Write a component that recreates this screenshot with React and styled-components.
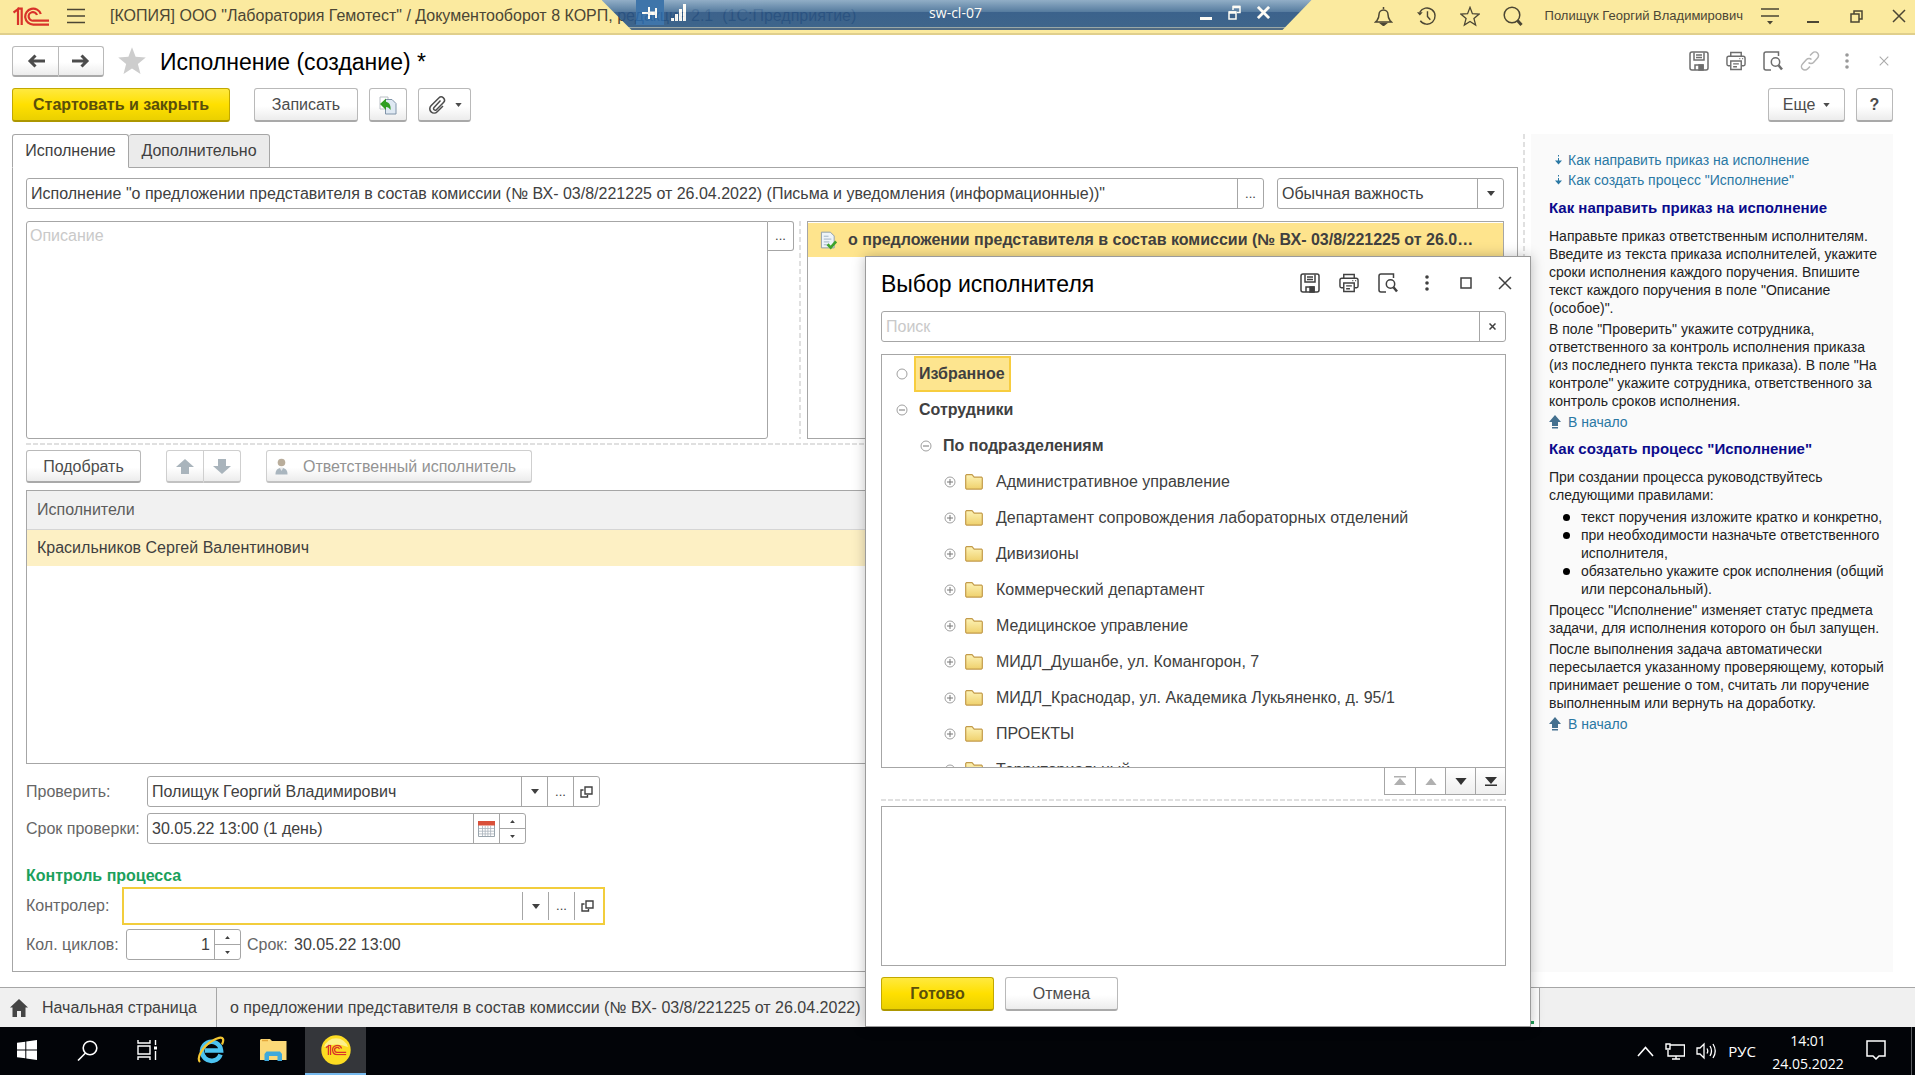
import React from "react";
import styled, { createGlobalStyle, css } from "styled-components";

const line = "#a6a6a6";
const sans = '"Liberation Sans", Arial, sans-serif';
const segoe = '"Open Sans", "Noto Sans", sans-serif';

const Global = createGlobalStyle`
  *, *::before, *::after { box-sizing: border-box; }
  body { margin: 0; background: #fff; }
  button, input, select, textarea { font: inherit; color: inherit; margin: 0; }
`;

const Screen = styled.div`
  position: relative;
  display: flex;
  flex-direction: column;
  min-height: 100vh;
  overflow: hidden;
  background: #fff;
  color: #404040;
  font: 16px/20px ${sans};
`;

/* ---------- title bar ---------- */
const TitleBar = styled.header`
  display: flex;
  align-items: center;
  height: 35px;
  padding: 0 6px 1px 13px;
  background: #fbea9f;
  border-bottom: 2px solid #e0cf8c;
  color: #4b4634;
`;
const AppTitle = styled.div`
  flex: 1;
  margin-left: 24px;
  white-space: pre;
`;
const UserName = styled.span`
  margin: 0 17px 0 22px;
  font-size: 13px;
`;
const PlainButton = styled.button`
  display: flex;
  align-items: center;
  justify-content: center;
  width: 20px;
  height: 24px;
  padding: 0;
  border: 0;
  background: none;
  color: ${(p) => p.$color || "inherit"};
`;
const IconStrip = styled.div`
  display: flex;
  align-items: center;
  gap: ${(p) => p.$gap}px;
`;

/* ---------- remote session bar ---------- */
const RemoteBar = styled.div`
  position: absolute;
  top: 0;
  left: 50%;
  margin-left: -356px;
  display: flex;
  align-items: center;
  justify-content: space-between;
  width: 710px;
  height: 30px;
  padding: 0 36px 5px 34px;
  background: linear-gradient(#86a8cb, #44709f 12px, #27548a 12px, #2a5789 27px, #8fa0a8 27px, #8fa0a8 28px, #405f80 28px);
  clip-path: polygon(0 0, 100% 0, 681px 100%, 30px 100%);
  opacity: 0.9;
  color: #fff;
  font: 14px/20px ${segoe};
`;
const RemoteSide = styled.div`
  display: flex;
  align-items: center;
  gap: ${(p) => p.$gap}px;
  width: 84px;
  padding-right: ${(p) => (p.$end ? 6 : 0)}px;
  justify-content: ${(p) => (p.$end ? "flex-end" : "flex-start")};
`;
const Pin = styled(PlainButton)`
  width: 28px;
  height: 25px;
  background: #2b69ab;
`;

/* ---------- form header ---------- */
const HeaderRow = styled.div`
  display: flex;
  align-items: center;
  height: 30px;
  margin: 11px 21px 12px 12px;
`;
const Heading = styled.h1`
  flex: 1;
  margin: 0 0 0 ${(p) => p.$ml || 0}px;
  padding-top: 1px;
  color: #000;
  font-size: 23px;
  line-height: 28px;
  font-weight: 400;
`;
const CommandRow = styled.div`
  display: flex;
  height: 34px;
  margin: 0 22px 12px 12px;
`;
const Spacer = styled.div`
  flex: ${(p) => (p.$w ? "none" : 1)};
  width: ${(p) => p.$w || 0}px;
`;
const Button = styled.button`
  display: flex;
  align-items: center;
  justify-content: ${(p) => (p.$start ? "flex-start" : "center")};
  gap: ${(p) => p.$gap || 0}px;
  flex: none;
  width: ${(p) => p.$w}px;
  height: ${(p) => p.$h || 34}px;
  padding: 1px 0 0 ${(p) => (p.$start ? 8 : 0)}px;
  border: 1px solid #b9b9b9;
  border-bottom: 2px solid #a9a9a9;
  border-radius: 3px;
  background: linear-gradient(#fff 55%, #ececec);
  color: #4c4c4c;
  ${(p) => p.$primary && css`
    border-color: #c2a800;
    border-bottom-color: #ad9700;
    background: linear-gradient(#ffe93f, #ffe000 50%, #ead000);
    color: #5a4f0a;
    font-weight: 700;
  `}
  &:disabled {
    border-color: #cfcfcf;
    border-bottom-color: #c2c2c2;
    color: #939393;
  }
`;
const ButtonPair = styled.div`
  display: flex;
  & > button:first-child { border-radius: 3px 0 0 3px; }
  & > button:last-child { border-left: 0; border-radius: 0 3px 3px 0; }
`;

/* ---------- body ---------- */
const Body = styled.main`
  flex: 1;
  display: flex;
  padding: 0 22px 15px 12px;
`;
const FormColumn = styled.section`
  flex: 1;
  min-width: 0;
  display: flex;
  flex-direction: column;
`;
const Tabs = styled.div`
  display: flex;
  height: 34px;
`;
const Tab = styled.button`
  position: relative;
  width: ${(p) => p.$w}px;
  height: 34px;
  padding: 0;
  border: 1px solid ${line};
  border-left-width: ${(p) => (p.$active ? 1 : 0)}px;
  border-bottom-color: ${(p) => (p.$active ? "#fff" : line)};
  border-radius: 3px 3px 0 0;
  background: ${(p) => (p.$active ? "#fff" : "#ebebeb")};
`;
const Panel = styled.div`
  flex: 1;
  display: flex;
  flex-direction: column;
  margin-top: -1px;
  padding: 10px 13px 11px;
  border: 1px solid ${line};
`;
const Row = styled.div`
  display: flex;
  gap: ${(p) => p.$gap || 0}px;
  margin-top: ${(p) => p.$mt || 0}px;
  height: ${(p) => (p.$h ? p.$h + "px" : "auto")};
  align-items: center;
`;
const Field = styled.div`
  display: flex;
  flex: ${(p) => (p.$w ? "none" : 1)};
  width: ${(p) => (p.$w ? p.$w + "px" : "auto")};
  min-width: 0;
  height: 31px;
  border: 1px solid ${line};
  border-radius: 3px;
  background: #fff;
  overflow: hidden;
  ${(p) => p.$focused && css`
    height: 38px;
    padding: 3px 3px 3px 2px;
    border: 2px solid #f2cd3c;
    border-radius: 0;
  `}
`;
const Input = styled.input`
  flex: 1;
  min-width: 0;
  padding: 0 4px;
  border: 0;
  outline: 0;
  background: none;
  text-align: ${(p) => (p.$right ? "right" : "left")};
  &::placeholder { color: #c9c9c9; opacity: 1; }
`;
const Select = styled.select`
  flex: 1;
  min-width: 0;
  padding: 0 4px;
  border: 0;
  outline: 0;
  appearance: none;
  background: none;
`;
const FieldButton = styled.button`
  display: flex;
  align-items: center;
  justify-content: center;
  width: 26px;
  padding: 0;
  border: 0;
  border-left: 1px solid ${line};
  background: none;
  font-size: 13px;
`;
const SelectArrow = styled(FieldButton).attrs({ as: "span", "aria-hidden": true })`
  pointer-events: none;
`;
const Spin = styled.div`
  display: flex;
  flex-direction: column;
  width: 26px;
  border-left: 1px solid ${line};
  & > button {
    flex: 1;
    width: auto;
    border-left: 0;
  }
  & > button + button { border-top: 1px solid ${line}; }
`;
const DescriptionWrap = styled.div`
  display: flex;
  align-items: flex-start;
  align-self: stretch;
  width: 768px;
`;
const Description = styled.textarea`
  flex: 1;
  align-self: stretch;
  min-width: 0;
  padding: 4px 3px;
  border: 1px solid ${line};
  border-radius: 3px 0 3px 3px;
  outline: 0;
  resize: none;
  &::placeholder { color: #c9c9c9; opacity: 1; }
`;
const SideButton = styled(FieldButton)`
  flex: none;
  height: 30px;
  border: 1px solid ${line};
  border-left: 0;
  border-radius: 0 3px 3px 0;
`;
const DashV = styled.div`
  flex: none;
  align-self: stretch;
  width: 2px;
  margin: 0 6px 0 5px;
  background: repeating-linear-gradient(#e0e0e0 0 5px, transparent 5px 8px);
`;
const DashH = styled.div`
  flex: none;
  height: 2px;
  margin: 4px 0 5px;
  background: repeating-linear-gradient(90deg, #e0e0e0 0 5px, transparent 5px 7px);
`;
const SubjectList = styled.div`
  flex: 1;
  min-width: 0;
  align-self: stretch;
  border: 1px solid ${line};
`;
const Subject = styled.div`
  display: flex;
  align-items: center;
  gap: 11px;
  height: 35px;
  padding: 0 28px 0 12px;
  border-top: 1px solid #fff;
  background: #fee48d;
  font-weight: 700;
  white-space: nowrap;
  & > span { overflow: hidden; text-overflow: ellipsis; }
`;
const TableBox = styled.div`
  flex: 1;
  min-height: 200px;
  margin-top: 7px;
  border: 1px solid ${line};
`;
const Table = styled.table`
  width: 100%;
  border-collapse: collapse;
  text-align: left;
  th, td { padding: 0 10px; font-weight: 400; }
  th { height: 38px; background: #f1f1f1; border-bottom: 1px solid #d5d5d5; color: #5c5c5c; }
  td { height: 37px; background: #fdf0c4; border: solid #fff; border-width: 1px 0; }
`;
const Label = styled.label`
  width: ${(p) => p.$w}px;
  color: #666;
  white-space: nowrap;
`;
const Section = styled.h2`
  margin: 22px 0 0;
  color: #1ba05c;
  font-size: 16px;
  line-height: 20px;
`;

/* ---------- help ---------- */
const Help = styled.aside`
  flex: none;
  width: 362px;
  padding: 16px 6px 0 18px;
  background: #fafafa;
  color: #222;
  font-size: 14px;
  line-height: 18px;
  p { margin: 0 0 3px; }
  h3 { margin: 9px 0 10px; color: #0b0b8c; font-size: 15px; line-height: 18px; }
  ul { margin: 4px 0 3px; padding-left: 14px; list-style: none; }
  li { display: flex; }
  li::before {
    content: "";
    flex: none;
    width: 7px;
    height: 7px;
    margin: 6px 11px 0 0;
    border-radius: 50%;
    background: #000;
  }
`;
const HelpLink = styled.a`
  display: flex;
  align-items: center;
  gap: ${(p) => (p.$contents ? 6 : 7)}px;
  height: ${(p) => (p.$contents ? 20 : 18)}px;
  padding-left: ${(p) => (p.$contents ? 6 : 0)}px;
  color: #2a78a4;
  text-decoration: none;
`;

/* ---------- open windows ---------- */
const WindowTabs = styled.nav`
  display: flex;
  height: 40px;
  border-top: 1px solid ${line};
  background: #f0f0f0;
`;
const WindowTab = styled.button`
  display: flex;
  align-items: center;
  gap: 14px;
  width: ${(p) => p.$w}px;
  padding: 0 0 0 ${(p) => p.$pad || 13}px;
  border: 0;
  border-right: 1px solid ${line};
  background: ${(p) => (p.$active ? "#fff" : "none")};
  white-space: nowrap;
  overflow: hidden;
`;
const ActiveMark = styled.span`
  flex: 1;
  align-self: flex-end;
  height: 3px;
  margin: 0 5px 3px 0;
  background: #1f9a55;
`;

/* ---------- dialog ---------- */
const Dialog = styled.section`
  position: absolute;
  top: 256px;
  right: 384px;
  bottom: 48px;
  display: flex;
  flex-direction: column;
  width: 666px;
  padding: 11px 24px 15px 15px;
  border: 1px solid #9b9b9b;
  background: #fff;
  box-shadow: 0 0 12px rgba(0, 0, 0, 0.25);
`;
const DialogHead = styled.div`
  display: flex;
  align-items: center;
  height: 30px;
  margin: 0 -9px 13px 0;
`;
const Tree = styled.ul`
  flex: 1;
  min-height: 0;
  height: 0;
  margin: 12px 0 0;
  padding: 0;
  border: 1px solid ${line};
  list-style: none;
  overflow: hidden;
`;
const TreeRow = styled.li`
  display: flex;
  align-items: center;
  height: ${(p) => (p.$selected ? 37 : 36)}px;
  padding-left: ${(p) => 13 + p.$level * 24}px;
  font-weight: ${(p) => (p.$bold ? 700 : 400)};
`;
const Toggle = styled.button`
  width: 14px;
  height: 14px;
  padding: 0;
  border: 0;
  background: none;
  line-height: 0;
`;
const TreeText = styled.span`
  margin-left: ${(p) => (p.$folder ? 13 : 5)}px;
  padding: ${(p) => (p.$folder ? 0 : "6px 4px 6px 5px")};
  ${(p) => p.$selected && css`
    padding: 6px 4px 6px 3px;
    border: 2px solid #f7cd3f;
    background: #fde58f;
  `}
`;
const FolderSlot = styled.span`
  margin-left: 8px;
  line-height: 0;
`;
const Pager = styled.div`
  display: flex;
  align-self: flex-end;
  border: 1px solid ${line};
  border-top: 0;
`;
const PagerButton = styled.button`
  display: flex;
  align-items: center;
  justify-content: center;
  width: 30px;
  height: 26px;
  padding: 0;
  border: 0;
  background: ${(p) => (p.disabled ? "#fff" : "linear-gradient(#fff, #efefef)")};
  color: #333;
  & + & { border-left: 1px solid ${line}; }
  &:disabled { color: #b0b0b0; }
`;
const Details = styled.div`
  height: 160px;
  border: 1px solid ${line};
`;

/* ---------- taskbar ---------- */
const Taskbar = styled.footer`
  display: flex;
  height: 48px;
  padding-right: 3px;
  background: #020408;
  color: #fff;
  font: 15px/23px ${segoe};
`;
const TaskButton = styled.button`
  display: flex;
  align-items: center;
  justify-content: center;
  width: ${(p) => p.$w || 61}px;
  padding: 0;
  border: 0;
  border-bottom: 2px solid ${(p) => (p.$active ? "#76b9ed" : "transparent")};
  background: ${(p) => (p.$active ? "#34363a" : "none")};
`;
const Clock = styled.time`
  width: 90px;
  padding-top: 2px;
  text-align: center;
  font-size: 14px;
`;
const DesktopEdge = styled.div`
  width: 1px;
  margin-left: 12px;
  background: #5a5c60;
`;

/* ---------- drawings ---------- */
const Svg = ({ w = 20, h = w, vb, sw = 1.5, children, fill = "none" }) => (
  <svg width={w} height={h} viewBox={vb || `0 0 ${w} ${h}`} fill={fill} stroke={fill === "none" ? "currentColor" : "none"} strokeWidth={sw} aria-hidden="true">
    {children}
  </svg>
);
const Logo1C = ({ color = "#d8322a" }) => (
  <svg width="36" height="19" viewBox="0 0 36 19" fill="none" stroke={color} strokeWidth="2.2" aria-hidden="true">
    <path d="M0.500 5.500 5 2.200V18" />
    <path d="M4.500 1.600h4.200V18" />
    <path d="M27.800 7A8 8 0 1 0 20.500 17.600H36" />
    <path d="M24 8A4.300 4.300 0 1 0 20.500 13.700H36" />
  </svg>
);
const Down = ({ w = 8, h = 5 }) => (
  <Svg w={w} h={h} vb="0 0 8 5" fill="currentColor"><path d="M0 0h8L4 5z" /></Svg>
);
const Up = ({ w = 5, h = 3 }) => (
  <Svg w={w} h={h} vb="0 0 8 5" fill="currentColor"><path d="M0 5h8L4 0z" /></Svg>
);
const Disk = () => (
  <Svg w={20}>
    <rect x="1" y="1" width="18" height="18" rx="2" />
    <path d="M5 1.500V9h10V1.500M7 4h6M7 6.500h6M6 19v-5h8v5" />
    <path d="M10 14h4v5h-4z" fill="currentColor" />
  </Svg>
);
const Printer = () => (
  <Svg w={21} h={20}>
    <path d="M5 5V1h11v4M4.500 15H2.500A1.500 1.500 0 0 1 1 13.500V7a2 2 0 0 1 2-2h15a2 2 0 0 1 2 2v6.500a1.500 1.500 0 0 1-1.500 1.500H16.500" />
    <path d="M5 10h11v9H5zM7.500 13h6M7.500 16h4M14 7.500h1M17 7.500h1" />
  </Svg>
);
const Preview = () => (
  <Svg w={20}>
    <path d="M8 19H3a2 2 0 0 1-2-2V3a2 2 0 0 1 2-2h12.500v4" />
    <circle cx="12.500" cy="11" r="4.200" />
    <path d="M15.500 14.200 19 18.500" strokeWidth="2.500" />
  </Svg>
);
const LinkIcon = () => (
  <Svg w={20}>
    <path d="M8.500 11.500a3.500 3.500 0 0 0 5 0l4-4.500a3.500 3.500 0 0 0-5-5L10 4.500M11.500 8.500a3.500 3.500 0 0 0-5 0l-4 4.500a3.500 3.500 0 0 0 5 5L10 15.500" />
  </Svg>
);
const Dots = () => (
  <Svg w={4} h={16} fill="currentColor"><circle cx="2" cy="2" r="1.800" /><circle cx="2" cy="8" r="1.800" /><circle cx="2" cy="14" r="1.800" /></Svg>
);
const Cross = ({ s = 14, sw = 1.5 }) => (
  <Svg w={s} vb="0 0 14 14" sw={sw}><path d="M1 1l12 12M13 1 1 13" /></Svg>
);
const OpenIcon = () => (
  <Svg w={13} h={12} sw={1.4}><path d="M5 1h7v7H5zM3.500 4H1v7h6.500V9" /></Svg>
);
const Arrow = ({ left }) => (
  <Svg w={18} h={14} sw={3}>
    <path d={left ? "M3 7h15M8.500 1.500 3 7l5.500 5.500" : "M0 7h15M9.500 1.500 15 7l-5.500 5.500"} />
  </Svg>
);
const BlockArrow = ({ down }) => (
  <Svg w={18} h={15} fill="#a9b4bc">
    <path d={down ? "M5 0h8v7h5l-9 8-9-8h5z" : "M5 15h8V8h5L9 0 0 8h5z"} />
  </Svg>
);
const Folder = () => (
  <svg width="18" height="16" viewBox="0 0 18 16" aria-hidden="true">
    <defs><linearGradient id="fld" x1="0" y1="0" x2="0" y2="1"><stop offset="0" stopColor="#fdf3b6" /><stop offset="1" stopColor="#efd06c" /></linearGradient></defs>
    <path d="M.7 14.200V1.500L1.500.7H7l2.200 2.400h7.300l.8.800v10.300l-1 .9H1.600z" fill="url(#fld)" stroke="#c39b4a" strokeWidth="1.200" />
  </svg>
);
const TreeMark = ({ kind }) => (
  <svg width="14" height="14" viewBox="0 0 14 14" fill="none" stroke="#a0a0a0" aria-hidden="true">
    <circle cx="7" cy="7" r="5" />
    {kind !== "leaf" && <path d="M4 7h6" stroke="#777" />}
    {kind === "plus" && <path d="M7 4v6" stroke="#777" />}
  </svg>
);
const DocCheck = () => (
  <svg width="18" height="19" viewBox="0 0 18 19" aria-hidden="true">
    <path d="M1.500.7h9.500l4 4v12.600H1.500z" fill="#eef4f9" stroke="#8c9dab" />
    <path d="M4 5h5M4 8h8M4 11h6M4 14h4" stroke="#9fb2c2" />
    <path d="M8 13.500l3.300 3.500L17 10.500" fill="none" stroke="#3fa32c" strokeWidth="2.800" />
  </svg>
);
const CopyBack = () => (
  <svg width="18" height="19" viewBox="0 0 18 19" aria-hidden="true">
    <path d="M1 1h8v12H1z" fill="#fff" stroke="#b9bfc5" />
    <path d="M6.500 3.500h6.500l4 4V18H6.500z" fill="#dfe9f3" stroke="#7f93a8" />
    <path d="M1 8l6-5.500v3.200c3.500.8 5 4 4.500 8.300-1.200-2-2.500-3-4.500-3v3z" fill="#2f9e22" />
  </svg>
);
const Clip = () => (
  <Svg w={18} h={18} sw={1.5}>
    <path d="M12.500 4.500 6 11.500a1.600 1.600 0 0 0 2.400 2.200L15.500 6.500a3.200 3.200 0 0 0-4.700-4.500L3 9.800a4.300 4.300 0 0 0 6.200 6L15 10" />
  </Svg>
);
const Person = () => (
  <svg width="13" height="18" viewBox="0 0 13 18" aria-hidden="true">
    <circle cx="6.500" cy="4.500" r="3.800" fill="#b9ad9b" />
    <path d="M.5 16.500c0-4 1.500-6.500 6-6.500s6 2.500 6 6.500z" fill="#aab6bf" />
    <path d="M4.500 9.500 6.500 13l2-3.500z" fill="#e8eaec" />
  </svg>
);
const Calendar = () => (
  <svg width="17" height="17" viewBox="0 0 17 17" aria-hidden="true">
    <path d="M.5 1.500h16v15H.5z" fill="#fff" stroke="#9aa5ad" />
    <path d="M0 1h17v4.500H0z" fill="#d9503a" />
    <path d="M1 8.500h15M1 11.200h15M1 13.900h15M4.500 6v10M7.200 6v10M9.900 6v10M12.600 6v10" stroke="#a9b3bb" strokeWidth=".8" />
  </svg>
);
const StarIcon = ({ s, filled }) => (
  <svg width={s} height={s} viewBox="0 0 24 24" fill={filled ? "#cdcdcd" : "none"} stroke={filled ? "none" : "currentColor"} strokeWidth="1.500" aria-hidden="true">
    <path d="M12 1l2.900 7.600 8.100.5-6.300 5.200 2.100 8L12 17.900l-6.800 4.400 2.100-8L1 9.100l8.100-.5z" />
  </svg>
);
const HelpDown = () => (
  <Svg w={7} h={12} sw={1} vb="0 0 7 12"><path d="M3.500 1v1.500M3.500 4v4" /><path d="M0 6.500h7L3.500 10.500z" fill="currentColor" stroke="none" /></Svg>
);
const HelpUp = () => (
  <Svg w={12} h={14} fill="#44708f"><path d="M6 0l6 7H9v4H3V7H0zM3 12h6v1.500H3z" /></Svg>
);

/* ---------- content ---------- */
const departments = [
  "Административное управление",
  "Департамент сопровождения лабораторных отделений",
  "Дивизионы",
  "Коммерческий департамент",
  "Медицинское управление",
  "МИДЛ_Душанбе, ул. Комангорон, 7",
  "МИДЛ_Краснодар, ул. Академика Лукьяненко, д. 95/1",
  "ПРОЕКТЫ",
  "Территориальный",
];
const rows = [
  { text: "Избранное", level: 0, kind: "leaf", bold: true, selected: true },
  { text: "Сотрудники", level: 0, kind: "minus", bold: true },
  { text: "По подразделениям", level: 1, kind: "minus", bold: true },
  ...departments.map((text) => ({ text, level: 2, kind: "plus", folder: true })),
];

const Choosers = () => (
  <>
    <FieldButton aria-label="Список"><Down /></FieldButton>
    <FieldButton aria-label="Выбрать">...</FieldButton>
    <FieldButton aria-label="Открыть"><OpenIcon /></FieldButton>
  </>
);
const Spinner = () => (
  <Spin>
    <FieldButton aria-label="Больше"><Up /></FieldButton>
    <FieldButton aria-label="Меньше"><Down w={5} h={3} /></FieldButton>
  </Spin>
);

export default function App() {
  return (
    <Screen>
      <Global />
      <TitleBar>
        <Logo1C />
        <Spacer $w={17} />
        <PlainButton aria-label="Меню"><Svg w={20} h={16} sw={1.6}><path d="M1 1.500h18M1 8h18M1 14.500h18" /></Svg></PlainButton>
        <AppTitle>{'[КОПИЯ] ООО "Лаборатория Гемотест" / Документооборот 8 КОРП, редакция 2.1  (1С:Предприятие)'}</AppTitle>
        <IconStrip $gap={23}>
          <PlainButton aria-label="Уведомления"><Svg w={19} h={20}><path d="M9.500 1v2M3 14.500c1.500-2 2-3.500 2-6a4.500 4.500 0 0 1 9 0c0 2.500.5 4 2 6l1.500 1.500h-16z" /><path d="M7 17.500h5l-2.500 2z" fill="currentColor" /></Svg></PlainButton>
          <PlainButton aria-label="История"><Svg w={21} h={20}><path d="M3 6a8.500 8.500 0 1 1 .5 9M11 5v5.500l3 3.500" /><path d="M0 6h6L3 9.500z" fill="currentColor" stroke="none" /></Svg></PlainButton>
          <PlainButton aria-label="Избранное"><StarIcon s={21} /></PlainButton>
          <PlainButton aria-label="Поиск"><Svg w={20}><circle cx="9" cy="9" r="7.800" /><path d="M14.500 14.500 18.500 19" strokeWidth="3" /></Svg></PlainButton>
        </IconStrip>
        <UserName>Полищук Георгий Владимирович</UserName>
        <IconStrip $gap={23}>
          <PlainButton aria-label="Настройка"><Svg w={18} h={18}><path d="M0 2h18M0 9h18" /><path d="M6 14h6l-3 3.500z" fill="currentColor" stroke="none" /></Svg></PlainButton>
          <PlainButton aria-label="Свернуть"><Svg w={12} h={16} sw={2}><path d="M0 14h12" /></Svg></PlainButton>
          <PlainButton aria-label="Восстановить"><Svg w={13} h={13}><path d="M1 4h8v8H1zM4 4V1h8v8H9" /></Svg></PlainButton>
          <PlainButton aria-label="Закрыть"><Cross /></PlainButton>
        </IconStrip>
      </TitleBar>

      <RemoteBar>
        <RemoteSide $gap={7}>
          <Pin aria-label="Закрепить"><Svg w={16} h={14} sw={2}><path d="M0 7h7M7 1v12M14 2v10" /><path d="M8 5.500h6v3.500H8z" fill="currentColor" stroke="none" /></Svg></Pin>
          <Svg w={16} h={17} fill="#fff"><path d="M0 14h3v3H0zM4 10h3v7H4zM8 5h3v12H8zM12 0h3v17h-3z" /></Svg>
        </RemoteSide>
        <span>sw-cl-07</span>
        <RemoteSide $gap={16} $end>
          <Svg w={12} h={14} sw={3}><path d="M0 12.500h12" /></Svg>
          <Svg w={13} h={15} sw={1.5}><path d="M1 7h7v7H1zM5 5V1.500h7v6H9" /><path d="M1 7.500h7M5 2h7" strokeWidth="2.500" /></Svg>
          <Cross s={13} sw={3} />
        </RemoteSide>
      </RemoteBar>

      <HeaderRow>
        <ButtonPair>
          <Button $w={47} $h={31} aria-label="Назад"><Arrow left /></Button>
          <Button $w={45} $h={31} aria-label="Вперед"><Arrow /></Button>
        </ButtonPair>
        <Spacer $w={13} />
        <StarIcon s={30} filled />
        <Heading $ml={13}>Исполнение (создание) *</Heading>
        <IconStrip $gap={17}>
          <PlainButton $color="#6d6d6d" aria-label="Сохранить"><Disk /></PlainButton>
          <PlainButton $color="#6d6d6d" aria-label="Печать"><Printer /></PlainButton>
          <PlainButton $color="#6d6d6d" aria-label="Просмотр"><Preview /></PlainButton>
          <PlainButton $color="#b5b5b5" aria-label="Ссылка"><LinkIcon /></PlainButton>
          <PlainButton $color="#999" aria-label="Действия"><Dots /></PlainButton>
          <PlainButton $color="#aaa" aria-label="Закрыть форму"><Cross s={10} /></PlainButton>
        </IconStrip>
      </HeaderRow>

      <CommandRow>
        <Button $primary $w={218}>Стартовать и закрыть</Button>
        <Spacer $w={24} />
        <Button $w={104}>Записать</Button>
        <Spacer $w={11} />
        <Button $w={38} aria-label="Создать на основании"><CopyBack /></Button>
        <Spacer $w={11} />
        <Button $w={53} $gap={9} aria-label="Файлы"><Clip /><Down w={7} h={4} /></Button>
        <Spacer />
        <Button $w={77} $gap={8}>Еще<Down w={7} h={4} /></Button>
        <Spacer $w={11} />
        <Button $w={37} aria-label="Справка"><b>?</b></Button>
      </CommandRow>

      <Body>
        <FormColumn>
          <Tabs>
            <Tab $active $w={117}>Исполнение</Tab>
            <Tab $w={141}>Дополнительно</Tab>
          </Tabs>
          <Panel>
            <Row $gap={13}>
              <Field>
                <Input aria-label="Наименование" defaultValue={'Исполнение "о предложении представителя в состав комиссии (№ ВХ- 03/8/221225 от 26.04.2022) (Письма и уведомления (информационные))"'} />
                <FieldButton aria-label="Выбрать">...</FieldButton>
              </Field>
              <Field $w={227}>
                <Select aria-label="Важность"><option>Обычная важность</option></Select>
                <SelectArrow><Down /></SelectArrow>
              </Field>
            </Row>
            <Row $mt={12} $h={218}>
              <DescriptionWrap>
                <Description placeholder="Описание" aria-label="Описание" />
                <SideButton aria-label="Выбрать описание">...</SideButton>
              </DescriptionWrap>
              <DashV />
              <SubjectList>
                <Subject><DocCheck /><span>о предложении представителя в состав комиссии (№ ВХ- 03/8/221225 от 26.04.2022)</span></Subject>
              </SubjectList>
            </Row>
            <DashH />
            <Row $gap={25}>
              <Button $w={115} $h={33}>Подобрать</Button>
              <ButtonPair>
                <Button $w={38} $h={33} disabled aria-label="Вверх"><BlockArrow /></Button>
                <Button $w={37} $h={33} disabled aria-label="Вниз"><BlockArrow down /></Button>
              </ButtonPair>
              <Button $w={266} $h={33} $gap={15} $start disabled><Person />Ответственный исполнитель</Button>
            </Row>
            <TableBox>
              <Table>
                <thead><tr><th scope="col">Исполнители</th></tr></thead>
                <tbody><tr><td>Красильников Сергей Валентинович</td></tr></tbody>
              </Table>
            </TableBox>
            <Row $mt={12}>
              <Label $w={121} htmlFor="check">Проверить:</Label>
              <Field $w={453}><Input id="check" defaultValue="Полищук Георгий Владимирович" /><Choosers /></Field>
            </Row>
            <Row $mt={6}>
              <Label $w={121} htmlFor="due">Срок проверки:</Label>
              <Field $w={379}>
                <Input id="due" defaultValue="30.05.22 13:00 (1 день)" />
                <FieldButton aria-label="Календарь"><Calendar /></FieldButton>
                <Spinner />
              </Field>
            </Row>
            <Section>Контроль процесса</Section>
            <Row $mt={1}>
              <Label $w={96} htmlFor="controller">Контролер:</Label>
              <Field $w={483} $focused><Input id="controller" /><Choosers /></Field>
            </Row>
            <Row $mt={4}>
              <Label $w={100} htmlFor="cycles">Кол. циклов:</Label>
              <Field $w={115}><Input id="cycles" $right defaultValue="1" /><Spinner /></Field>
              <Spacer $w={6} />
              <Label as="span" $w={47}>Срок:</Label>
              <span>30.05.22 13:00</span>
            </Row>
          </Panel>
        </FormColumn>
        <DashV />
        <Help>
          <HelpLink href="#send" $contents><HelpDown />Как направить приказ на исполнение</HelpLink>
          <HelpLink href="#create" $contents><HelpDown />Как создать процесс "Исполнение"</HelpLink>
          <h3 id="send">Как направить приказ на исполнение</h3>
          <p>Направьте приказ ответственным исполнителям. Введите из текста приказа исполнителей, укажите сроки исполнения каждого поручения. Впишите текст каждого поручения в поле "Описание (особое)".</p>
          <p>В поле "Проверить" укажите сотрудника, ответственного за контроль исполнения приказа (из последнего пункта текста приказа). В поле "На контроле" укажите сотрудника, ответственного за контроль сроков исполнения.</p>
          <HelpLink href="#top"><HelpUp />В начало</HelpLink>
          <h3 id="create">Как создать процесс "Исполнение"</h3>
          <p>При создании процесса руководствуйтесь следующими правилами:</p>
          <ul>
            <li>текст поручения изложите кратко и конкретно,</li>
            <li>при необходимости назначьте ответственного исполнителя,</li>
            <li>обязательно укажите срок исполнения (общий или персональный).</li>
          </ul>
          <p>Процесс "Исполнение" изменяет статус предмета задачи, для исполнения которого он был запущен.</p>
          <p>После выполнения задача автоматически пересылается указанному проверяющему, который принимает решение о том, считать ли поручение выполненным или вернуть на доработку.</p>
          <HelpLink href="#top"><HelpUp />В начало</HelpLink>
        </Help>
      </Body>

      <WindowTabs>
        <WindowTab $w={217} $pad={10}>
          <Svg w={18} h={18} fill="#454545"><path d="M9 0l9 8.500h-2.500V18h-4.500v-6h-4v6H2.500V8.500H0z" /></Svg>
          Начальная страница
        </WindowTab>
        <WindowTab $w={661}>о предложении представителя в состав комиссии (№ ВХ- 03/8/221225 от 26.04.2022)</WindowTab>
        <WindowTab $w={662} $active aria-label="Исполнение (создание)"><ActiveMark /></WindowTab>
      </WindowTabs>

      <Taskbar>
        <Spacer $w={3} />
        <TaskButton $w={48} aria-label="Пуск"><Svg w={20} fill="#fff"><path d="M0 2.800 8.300 1.700V9.500H0zM9.300 1.500 20 0v9.500H9.300zM0 10.500h8.300v7.800L0 17.200zM9.300 10.500H20V20L9.300 18.500z" /></Svg></TaskButton>
        <Spacer $w={6} />
        <TaskButton aria-label="Поиск в системе"><Svg w={21} h={21} sw={1.6}><circle cx="13" cy="8" r="6.800" /><path d="M8.500 13 1 20.500" /></Svg></TaskButton>
        <TaskButton $w={58} aria-label="Представление задач"><Svg w={21} h={20} sw={1.4}><path d="M1 0v3h12V0M1 20v-3h12v3M1 6h12v8H1zM18.500 0v5M18.500 11v9" /><path d="M17 6.500h3v3h-3z" fill="#fff" stroke="none" /></Svg></TaskButton>
        <TaskButton $w={69} aria-label="Internet Explorer">
          <svg width="28" height="28" viewBox="0 0 28 28" fill="none" aria-hidden="true">
            <path d="M23.500 18.500A9.500 9.500 0 1 1 24 14.500H8" stroke="#4cc3f1" strokeWidth="4.600" />
            <path d="M3 26C-1 22 6 10 15 5c5-3.200 10-4.600 11-2 .6 1.500 0 3.500-1 5.500" stroke="#f3c632" strokeWidth="2.200" />
          </svg>
        </TaskButton>
        <TaskButton $w={56} aria-label="Проводник">
          <svg width="27" height="24" viewBox="0 0 27 24" aria-hidden="true">
            <path d="M0 2 1 1h9l2 2h14.500v19H0z" fill="#fbd978" />
            <path d="M2 2.500h6" stroke="#e4a73a" strokeWidth="1.500" />
            <path d="M4.500 23V16l2-2.500h13.500l2 2.500v7h-4.500v-5h-8.500v5z" fill="#3fa9dc" />
          </svg>
        </TaskButton>
        <Spacer $w={4} />
        <TaskButton $active aria-label="1С:Предприятие">
          <svg width="30" height="30" viewBox="0 0 30 30" aria-hidden="true">
            <circle cx="15" cy="15" r="14.700" fill="#fcdc22" />
            <path d="M3 12a12.500 12 0 0 1 24 0Q15 7 3 12z" fill="#fdf08a" />
            <g transform="translate(4.500 9.500) scale(.58)"><Logo1C /></g>
          </svg>
        </TaskButton>
        <Spacer />
        <IconStrip $gap={11}>
          <Svg w={17} h={11} sw={1.6}><path d="M1 10l7.500-8.500L16 10" /></Svg>
          <Svg w={20} h={17} sw={1.4}><path d="M5 2h14.500v11H3V7M1 1h4v5H1zM11 13v3M7 16h8" /></Svg>
          <Svg w={21} h={18} sw={1.3}><path d="M1 6h3l4-4v14l-4-4H1zM11 6.500q1.500 2.500 0 5M14 4q3 5 0 10M17 2q4.500 7 0 14" /></Svg>
          <span>РУС</span>
        </IconStrip>
        <Spacer $w={7} />
        <Clock>14:01<br />24.05.2022</Clock>
        <TaskButton $w={46} aria-label="Центр уведомлений"><Svg w={20} h={20} sw={1.5}><path d="M1 1h18v15h-6l-3 3-3-3H1z" /></Svg></TaskButton>
        <DesktopEdge />
      </Taskbar>

      <Dialog role="dialog" aria-label="Выбор исполнителя">
        <DialogHead>
          <Heading as="h2">Выбор исполнителя</Heading>
          <IconStrip $gap={19}>
            <PlainButton aria-label="Сохранить"><Disk /></PlainButton>
            <PlainButton aria-label="Печать"><Printer /></PlainButton>
            <PlainButton aria-label="Просмотр"><Preview /></PlainButton>
            <PlainButton aria-label="Действия"><Dots /></PlainButton>
            <PlainButton aria-label="Развернуть"><Svg w={12} h={12}><path d="M1 1h10v10H1z" /></Svg></PlainButton>
            <PlainButton aria-label="Закрыть диалог"><Cross /></PlainButton>
          </IconStrip>
        </DialogHead>
        <Row>
          <Field>
            <Input aria-label="Поиск исполнителя" placeholder="Поиск" />
            <FieldButton aria-label="Очистить"><Cross s={7} sw={3} /></FieldButton>
          </Field>
        </Row>
        <Tree>
          {rows.map((r) => (
            <TreeRow key={r.text} $level={r.level} $bold={r.bold} $selected={r.selected}>
              <Toggle aria-label={r.text}><TreeMark kind={r.kind} /></Toggle>
              {r.folder && <FolderSlot><Folder /></FolderSlot>}
              <TreeText $folder={r.folder} $selected={r.selected}>{r.text}</TreeText>
            </TreeRow>
          ))}
        </Tree>
        <Pager>
          <PagerButton disabled aria-label="В начало списка"><Svg w={12} h={10} fill="currentColor"><path d="M0 0h12v1.500H0zM6 2l6 7H0z" /></Svg></PagerButton>
          <PagerButton disabled aria-label="Выше"><Up w={12} h={7} /></PagerButton>
          <PagerButton aria-label="Ниже"><Down w={12} h={7} /></PagerButton>
          <PagerButton aria-label="В конец списка"><Svg w={12} h={10} fill="currentColor"><path d="M0 8.500h12V10H0zM6 8l6-7H0z" /></Svg></PagerButton>
        </Pager>
        <DashH />
        <Details />
        <Row $mt={11} $gap={11}>
          <Button $primary $w={113}>Готово</Button>
          <Button $w={113}>Отмена</Button>
        </Row>
      </Dialog>
    </Screen>
  );
}
